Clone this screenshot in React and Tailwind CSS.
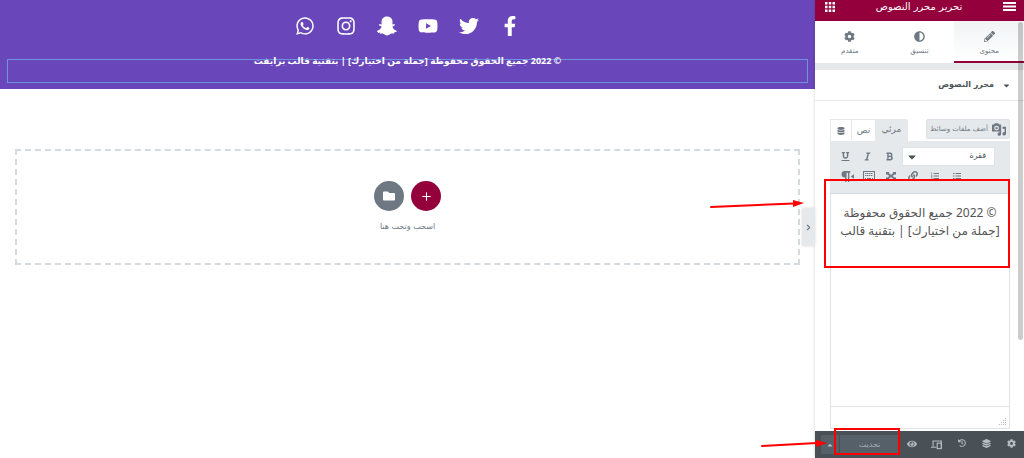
import React, { useState } from "react";
import {
  FaAdjust,
  FaBold,
  FaCaretDown,
  FaCaretUp,
  FaCog,
  FaDatabase,
  FaEye,
  FaFacebookF,
  FaFolder,
  FaHistory,
  FaInstagram,
  FaItalic,
  FaLayerGroup,
  FaLink,
  FaListOl,
  FaListUl,
  FaPencilAlt,
  FaSnapchatGhost,
  FaTwitter,
  FaUnderline,
  FaWhatsapp,
  FaYoutube,
} from "react-icons/fa";
import { ChevronRight, Plus } from "lucide-react";

const socials = [
  { name: "Facebook", Icon: FaFacebookF },
  { name: "Twitter", Icon: FaTwitter },
  { name: "YouTube", Icon: FaYoutube },
  { name: "Snapchat", Icon: FaSnapchatGhost },
  { name: "Instagram", Icon: FaInstagram },
  { name: "WhatsApp", Icon: FaWhatsapp },
];

const tabs = [
  { id: "content", label: "محتوى", Icon: FaPencilAlt },
  { id: "style", label: "تنسيق", Icon: FaAdjust },
  { id: "advanced", label: "متقدم", Icon: FaCog },
];

function MediaIcon() {
  return (
    <svg viewBox="0 0 20 18" className="w-[14px] h-[13px] shrink-0" fill="currentColor">
      <path
        fillRule="evenodd"
        d="M3 2l1-2h5l1 2h2q1 0 1 1v9h-12q-1 0-1-1V3q0-1 1-1zM6.500 3.500a3.500 3.500 0 100 7 3.500 3.500 0 000-7zm0 1.800a1.700 1.700 0 110 3.400 1.700 1.700 0 010-3.400z"
      />
      <path d="M15 5h5v10a2.500 2.500 0 11-2-2.400V8h-3zM13 11v4.500a2.500 2.500 0 11-2-2.400V11z" />
    </svg>
  );
}

function ParagraphIcon() {
  return (
    <svg viewBox="0 0 14 12" className="w-[13px] h-[11px]" fill="currentColor">
      <path d="M4 0h6v2H9v10H7.500V2H6v10H4.500V7H4a3.500 3.500 0 010-7z" />
      <path d="M14 3.500v5L10.500 6z" />
    </svg>
  );
}

function KeyboardIcon() {
  return (
    <svg viewBox="0 0 12 10" className="w-3 h-[10px]" stroke="currentColor">
      <rect x="0.500" y="0.500" width="11" height="9" fill="none" />
      <path d="M2 2.500h8M2 4.500h8" strokeDasharray="1.400 0.500" />
      <path d="M2 7.500h1M4 7.500h4M9 7.500h1" />
    </svg>
  );
}

function FullscreenIcon() {
  return (
    <svg viewBox="0 0 12 10" className="w-3 h-[10px]" fill="currentColor">
      <path d="M1 1h3.500L3.700 2 6 4.100 8.300 2 7.500 1H11v3l-1-.8L7.500 5 10 6.800l1-.8v3H7.500l.8-1L6 5.900 3.700 8l.8 1H1V6l1 .8L4.500 5 2 3.200 1 4z" />
    </svg>
  );
}

function DevicesIcon() {
  return (
    <svg viewBox="0 0 16 16" className="w-[11px] h-[11px]" fill="none" stroke="currentColor" strokeWidth="1.600">
      <path d="M3 11V3h12v10M0 12h8" />
      <rect x="9" y="6" width="6" height="8" />
    </svg>
  );
}

function Arrow({ className }) {
  return (
    <svg viewBox="0 0 94 12" className={`absolute pointer-events-none ${className}`}>
      <path d="M1 8L84 4.500" stroke="#ff0000" strokeWidth="2" strokeLinecap="round" />
      <path d="M83 1l11 3-11 4z" fill="#ff0000" />
    </svg>
  );
}

function ShortArrow({ className }) {
  return (
    <svg viewBox="0 0 66 10" className={`absolute pointer-events-none ${className}`}>
      <path d="M1 7L56 4" stroke="#ff0000" strokeWidth="2" strokeLinecap="round" />
      <path d="M55 1l11 3-11 4z" fill="#ff0000" />
    </svg>
  );
}

function ToolButton({ label, children }) {
  return (
    <button aria-label={label} className="w-[22px] h-5 flex items-center justify-center">
      {children}
    </button>
  );
}

function Editor() {
  const [text, setText] = useState("© 2022 جميع الحقوق محفوظة\n[جملة من اختيارك] | بتقنية قالب");

  return (
    <div className="relative flex-1 flex flex-col mr-[14px] ml-[15px] mt-[18px] mb-[2px] text-[#6d7882]">
      <div className="flex justify-between items-start">
        <button className="w-[84px] h-5 flex items-center justify-center gap-1 rounded-xs border border-[#dde1e5] bg-[#e6e9ec] text-[7px] whitespace-nowrap">
          <MediaIcon />
          أضف ملفات وسائط
        </button>
        <div className="flex h-[22px] text-[9px]">
          <button className="w-[33px] bg-[#e6e9ec] rounded-tr-xs">مرئي</button>
          <button className="w-[23px] border-t border-[#e6e9ec]">نص</button>
          <button aria-label="بيانات" className="w-[22px] border border-b-0 border-[#e6e9ec] flex items-center justify-center">
            <FaDatabase className="w-2 h-2" />
          </button>
        </div>
      </div>

      <div className="h-[53px] shrink-0 bg-[#e6e9ec] border-b border-[#d5dadf] pt-[5px]">
        <div className="flex items-center pr-[15px]">
          <div className="relative w-[93px] h-[19px] ml-[2px]">
            <select
              aria-label="التنسيق"
              className="block appearance-none w-full h-full bg-white border border-[#dfe3e7] pr-2 text-[8px] text-[#495157]"
            >
              <option>فقرة</option>
            </select>
            <FaCaretDown className="absolute left-1 top-1 w-3 h-3 text-[#495157] pointer-events-none" />
          </div>
          <ToolButton label="عريض"><FaBold className="w-[9px] h-[9px]" /></ToolButton>
          <ToolButton label="مائل"><FaItalic className="w-[9px] h-[9px]" /></ToolButton>
          <ToolButton label="تسطير"><FaUnderline className="w-[9px] h-[9px]" /></ToolButton>
        </div>
        <div className="flex items-center pr-[42px]">
          <ToolButton label="قائمة"><FaListUl className="w-2 h-2" /></ToolButton>
          <ToolButton label="قائمة مرقمة"><FaListOl className="w-2 h-2" /></ToolButton>
          <ToolButton label="رابط"><FaLink className="w-[10px] h-[10px]" /></ToolButton>
          <ToolButton label="ملء الشاشة"><FullscreenIcon /></ToolButton>
          <ToolButton label="لوحة المفاتيح"><KeyboardIcon /></ToolButton>
          <ToolButton label="اتجاه النص"><ParagraphIcon /></ToolButton>
        </div>
      </div>

      <textarea
        aria-label="النص"
        value={text}
        onChange={(e) => setText(e.target.value)}
        className="flex-1 min-h-0 resize-none overflow-hidden outline-none border-x border-[#e0e4e8] px-1 pt-[10px] text-center text-xs leading-[18px] text-[#555] font-['Noto_Sans','DejaVu_Sans',sans-serif]"
      />
      <div className="h-[23px] shrink-0 border border-[#e0e4e8] flex items-end justify-start p-[2px]">
        <svg viewBox="0 0 8 8" className="w-2 h-2" fill="#b5bbc0">
          <path d="M6 0h1v1H6zM4 2h1v1H4zM6 2h1v1H6zM2 4h1v1H2zM4 4h1v1H4zM6 4h1v1H6zM0 6h1v1H0zM2 6h1v1H2zM4 6h1v1H4zM6 6h1v1H6z" />
        </svg>
      </div>

      {/* highlight around the text */}
      <div className="absolute -left-[6px] right-0 top-[60px] h-[89px] border-2 border-[#ff0000] pointer-events-none" />
    </div>
  );
}

function Panel() {
  const [active, setActive] = useState("content");

  return (
    <aside className="relative w-[209px] shrink-0 flex flex-col bg-white shadow-[0_0_3px_rgba(0,0,0,0.2)]">
      <header className="h-[21px] shrink-0 bg-[#93003c] text-white flex justify-between px-2 pb-2 items-center">
        <button aria-label="القائمة">
          <svg viewBox="0 0 13 9" className="w-[13px] h-[9px]" fill="currentColor">
            <path d="M0 0h13v2H0zM0 3.500h13v2H0zM0 7h13v2H0z" />
          </svg>
        </button>
        <h1 className="text-[10px] leading-3">تحرير محرر النصوص</h1>
        <button aria-label="العناصر" className="pl-[2px]">
          <svg viewBox="0 0 10 10" className="w-[10px] h-[10px]" fill="currentColor">
            <path d="M0 0h2.500v2.500H0zM3.750 0h2.500v2.500h-2.500zM7.500 0H10v2.500H7.500zM0 3.750h2.500v2.500H0zM3.750 3.750h2.500v2.500h-2.500zM7.500 3.750H10v2.500H7.500zM0 7.500h2.500V10H0zM3.750 7.500h2.500V10h-2.500zM7.500 7.500H10V10H7.500z" />
          </svg>
        </button>
      </header>

      <nav className="flex h-[42px] shrink-0">
        {tabs.map(({ id, label, Icon }) => (
          <button
            key={id}
            onClick={() => setActive(id)}
            className={`flex-1 flex flex-col items-center pt-[10px] gap-1 text-[7px] leading-[10px] text-[#6d7882] border-b-2 ${
              active === id
                ? "border-[#93003c] bg-linear-to-b from-[#f1f3f5] to-white"
                : "border-transparent"
            }`}
          >
            <Icon className="w-[11px] h-[11px]" />
            {label}
          </button>
        ))}
      </nav>

      <button className="h-[38px] shrink-0 border-t-[7px] border-b border-t-[#e6e9ec] border-b-[#e6e9ec] flex items-center gap-2 px-[13px] text-[8px] font-bold text-[#495157]">
        <FaCaretDown className="w-[9px] h-[9px]" />
        محرر النصوص
      </button>

      <Editor />

      <footer className="relative h-[27px] shrink-0 bg-[#495157] text-[#b4bec5] flex items-center pl-[6px]">
        <div className="flex-1 flex">
          <button aria-label="الإعدادات" className="flex-1 flex justify-center"><FaCog className="w-[9px] h-[9px]" /></button>
          <button aria-label="الطبقات" className="flex-1 flex justify-center"><FaLayerGroup className="w-[9px] h-[9px]" /></button>
          <button aria-label="السجل" className="flex-1 flex justify-center"><FaHistory className="w-2 h-2" /></button>
          <button aria-label="الأجهزة" className="flex-1 flex justify-center"><DevicesIcon /></button>
          <button aria-label="معاينة" className="flex-1 flex justify-center"><FaEye className="w-[10px] h-[10px]" /></button>
        </div>
        <button className="w-[59px] h-[19px] bg-[#556068] text-[8px] text-[#a4afb7]">تحديث</button>
        <button aria-label="خيارات الحفظ" className="w-[19px] h-[19px] bg-[#556068] border-r border-[#495157] flex items-center justify-center">
          <FaCaretUp className="w-2 h-2" />
        </button>
        <div className="absolute left-[19px] -top-[3px] w-[66px] h-[27px] border-2 border-[#ff0000] pointer-events-none" />
        <ShortArrow className="-left-[54px] top-[8px] w-[66px] h-[10px]" />
      </footer>

      {/* scrollbar thumb */}
      <div className="absolute right-[1px] top-[22px] w-[5px] h-[318px] rounded-full bg-black/20" />

      <button
        aria-label="إخفاء اللوحة"
        className="absolute right-full top-[208px] w-[13px] h-[38px] rounded-l-xs bg-[#e6e9ec] text-[#6d7882] shadow-[0_0_3px_rgba(0,0,0,0.15)] flex items-center justify-center"
      >
        <ChevronRight className="w-[9px] h-[9px]" strokeWidth={3} />
      </button>
      <Arrow className="right-[220px] top-[199px] w-[94px] h-3" />
    </aside>
  );
}

function App() {
  return (
    <div dir="rtl" className="flex h-screen overflow-hidden bg-white font-['DejaVu_Sans',sans-serif]">
      <Panel />

      <main className="flex-1 min-w-0">
        <section className="bg-[#6947ba] text-white pt-4 px-[7px] pb-[6px]">
          <div className="flex justify-center">
            {socials.map(({ name, Icon }) => (
              <a key={name} href="#" aria-label={name} className="w-[41px] flex justify-center">
                <Icon className="text-xl" />
              </a>
            ))}
          </div>
          <div className="mt-[23px] h-6 border border-[#6a94dc] text-center">
            <p className="-mt-[7px] text-[9px] leading-4 font-bold font-['Noto_Sans','DejaVu_Sans',sans-serif]">
              © 2022 جميع الحقوق محفوظة [جملة من اختيارك] | بتقنية قالب برايفت
            </p>
          </div>
        </section>

        <section className="mx-[15px] mt-[60px] h-[116px] border-2 border-dashed border-[#d5dadf] flex flex-col items-center pt-[30px]">
          <div className="flex gap-[7px]">
            <button aria-label="إضافة قسم" className="w-[30px] h-[30px] rounded-full bg-[#93003c] text-white flex items-center justify-center">
              <Plus className="w-[13px] h-[13px]" />
            </button>
            <button aria-label="إضافة قالب" className="w-[30px] h-[30px] rounded-full bg-[#6d7882] text-white flex items-center justify-center">
              <FaFolder className="w-3 h-3" />
            </button>
          </div>
          <p className="mt-2 text-[8px] leading-4 text-[#6d7882]">اسحب وتحت هنا</p>
        </section>
      </main>
    </div>
  );
}

export default App;
